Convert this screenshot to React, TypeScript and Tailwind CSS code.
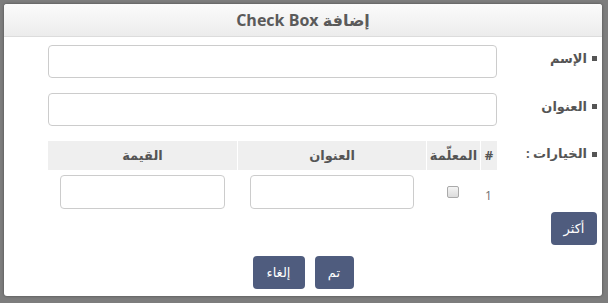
import React from "react";

const Bullet = () => <span className="inline-block w-[5px] h-[5px] bg-[#555] ml-[5px]" />;

export default function App() {
  const font = { fontFamily: '"Open Sans", "DejaVu Sans", sans-serif' };
  return (
    <div className="w-[608px] h-[303px] bg-[#7d7d7d] pt-[4px] pl-[4px] overflow-hidden" style={font}>
      <div dir="rtl" className="w-[598px] h-[292px] bg-white rounded-[3px] shadow-[0_0_3px_rgba(0,0,0,0.4)] overflow-hidden flex flex-col">
        <div className="h-[33px] flex items-center justify-center bg-gradient-to-b from-[#fbfbfb] to-[#ececec] border-b border-[#dcdcdc] text-[16px] font-bold text-[#5a5a5a]">
          <span>إضافة Check Box</span>
        </div>
        <div className="flex flex-col pt-[8px] pr-[5px] pl-[44px]">
          <div className="flex h-[33px]">
            <div className="w-[100px] h-[27px] text-[13px] font-bold text-[#555] flex items-center">
              <Bullet />
              <span>الإسم</span>
            </div>
            <input className="flex-1 border border-[#cccccc] rounded-[4px]" />
          </div>
          <div className="flex h-[33px] mt-[15px]">
            <div className="w-[100px] h-[27px] text-[13px] font-bold text-[#555] flex items-center">
              <Bullet />
              <span>العنوان</span>
            </div>
            <input className="flex-1 border border-[#cccccc] rounded-[4px]" />
          </div>
          <div className="flex mt-[15px]">
            <div className="w-[100px] h-[26px] text-[13px] font-bold text-[#555] flex items-center">
              <Bullet />
              <span>الخيارات :</span>
            </div>
            <div className="flex-1 flex flex-col">
              <div className="flex h-[29px] bg-[#efefef] text-[13px] font-bold text-[#555]">
                <div className="w-[17px] flex items-center justify-center border-l border-white">#</div>
                <div className="w-[54px] flex items-center justify-center border-l border-white">المعلّمة</div>
                <div className="w-[189px] flex items-center justify-center border-l border-white">العنوان</div>
                <div className="flex-1 flex items-center justify-center">القيمة</div>
              </div>
              <div className="flex h-[44px] items-center">
                <div className="w-[17px] flex items-center justify-center pt-[8px] text-[12px] text-[#707070]">1</div>
                <div className="w-[54px] flex items-center justify-center">
                  <span className="block w-[12px] h-[12px] rounded-[2px] border border-[#aaa] bg-gradient-to-b from-[#f4f4f4] to-[#dcdcdc]" />
                </div>
                <div className="w-[189px] flex items-center justify-center">
                  <input className="w-[164px] h-[34px] border border-[#cccccc] rounded-[4px]" />
                </div>
                <div className="flex-1 flex items-center justify-center">
                  <input className="w-[165px] h-[34px] border border-[#cccccc] rounded-[4px]" />
                </div>
              </div>
            </div>
          </div>
          <div className="flex mt-[-2px]">
            <button className="w-[46px] h-[33px] rounded-[4px] bg-[#4f5c7e] text-white text-[13px]">أكثر</button>
          </div>
          <div className="flex justify-center gap-[10px] mt-[11px] ml-[-44px] mr-[-5px]">
            <button className="w-[39px] h-[33px] rounded-[4px] bg-[#4f5c7e] text-white text-[13px]">تم</button>
            <button className="w-[52px] h-[33px] rounded-[4px] bg-[#4f5c7e] text-white text-[13px]">إلغاء</button>
          </div>
        </div>
      </div>
    </div>
  );
}
